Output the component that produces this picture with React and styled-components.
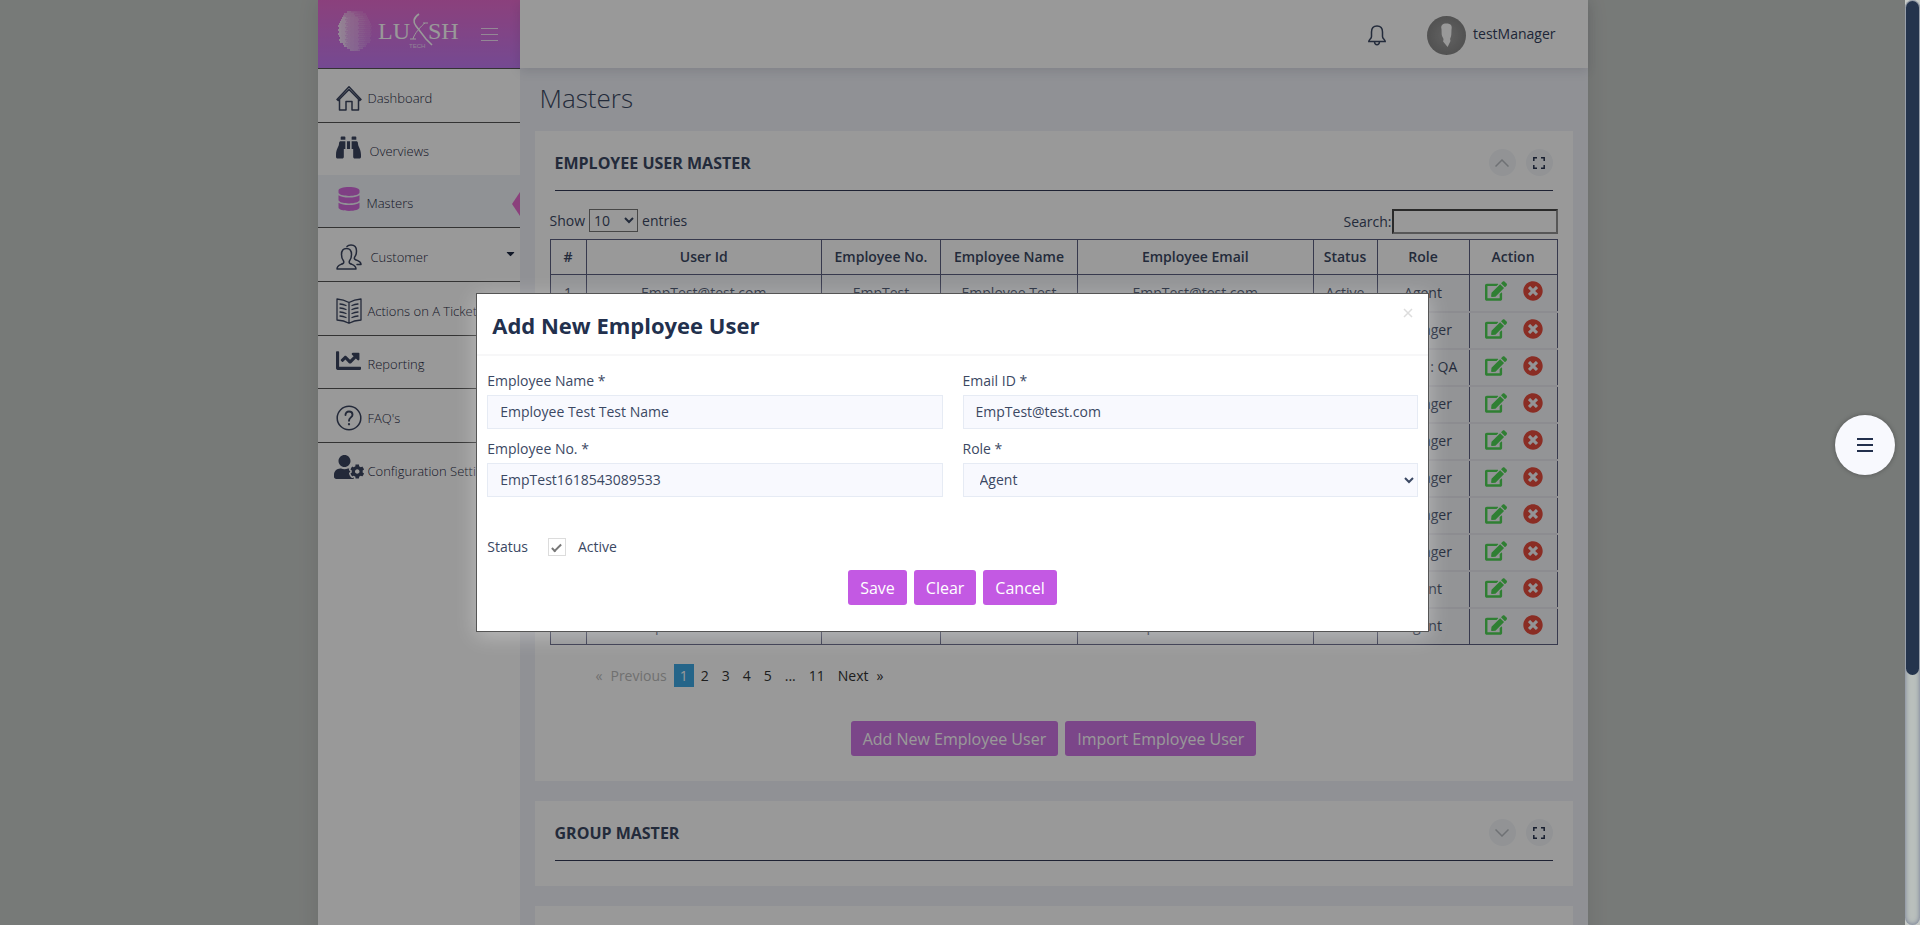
import React, { useState } from 'react';
import styled, { createGlobalStyle, css } from 'styled-components';
import { FaBinoculars, FaDatabase, FaChartLine, FaUserCog, FaEdit, FaTimesCircle, FaCaretDown } from 'react-icons/fa';

const GlobalStyle = createGlobalStyle`
  *, *::before, *::after { box-sizing: border-box; }
  body {
    margin: 0;
    font-family: "Open Sans", "Noto Sans", sans-serif;
    font-size: 14px;
    line-height: 20px;
    color: #3b4863;
    background: #c7cbc8;
  }
  button, input, select { font: inherit; color: inherit; }
  a { color: inherit; text-decoration: none; }
`;

const Window = styled.div`
  display: flex;
  height: 100vh;
  overflow: hidden;
`;

const Viewport = styled.div`
  position: relative;
  flex: 1;
  min-width: 0;
  overflow: hidden;
`;

const Scroller = styled.div`
  height: 100%;
  overflow-y: auto;
  scrollbar-width: none;
`;

const ScrollTrack = styled.div`
  flex: 0 0 15px;
  padding: 1px;
  background: #b9bfbc;
  border-radius: 8px;
  box-shadow: inset 0 0 5px #6b7590;
`;

const ScrollThumb = styled.div`
  height: 73%;
  background: #24344d;
  border-radius: 8px;
`;

const Shell = styled.div`
  max-width: 1270px;
  min-height: 100%;
  margin: 0 auto;
  background: #f0f2f8;
  box-shadow: 0 0 20px rgba(0, 0, 0, 0.1);
  display: grid;
  grid-template-columns: 202px minmax(0, 1fr);
  grid-template-rows: 68px auto;
`;

const Brand = styled.div`
  display: flex;
  align-items: center;
  gap: 22px;
  padding-left: 19px;
  background: linear-gradient(#e86ccf, #c37bf3);
  color: #fff;
  button {
    display: flex;
    padding: 0;
    border: 0;
    background: none;
    opacity: 0.8;
  }
`;

const TopBar = styled.header`
  position: relative;
  display: flex;
  align-items: center;
  justify-content: flex-end;
  padding: 2px 32px 0 0;
  background: #fff;
  box-shadow: 0 3px 10px rgba(60, 70, 100, 0.15);
`;

const PlainButton = styled.button`
  display: flex;
  align-items: center;
  padding: 0;
  border: 0;
  background: none;
`;

const User = styled(PlainButton)`
  margin-left: 41px;
  gap: 7px;
  color: #333f5c;
  span { padding-bottom: 3px; }
`;

const Sidebar = styled.nav`
  background: #fff;
  border-top: 1px solid #555;
`;

const NavItem = styled.a`
  position: relative;
  display: flex;
  align-items: center;
  gap: ${(p) => p.$gap || 6}px;
  height: ${(p) => (p.$line ? (p.$short ? 53 : 54) : 52)}px;
  padding: 4px 0 0 18px;
  border-bottom: ${(p) => (p.$line ? '1px solid #555' : '0')};
  font-size: 13px;
  font-weight: 300;
  white-space: nowrap;
  overflow: hidden;
  color: #1f2a44;
  ${(p) =>
    p.$active &&
    css`
      background: #f0f3f8;
      &::after {
        content: '';
        position: absolute;
        right: 0;
        top: 17px;
        border: 12px solid transparent;
        border-left: 0;
        border-right: 8px solid #e86ccf;
      }
    `}
`;

const NavIcon = styled.span`
  flex: 0 0 26px;
  min-width: 0;
  display: flex;
  justify-content: center;
  color: ${(p) => (p.$active ? '#d469dd' : '#3b4560')};
  padding-bottom: ${(p) => (p.$raised ? 8 : 0)}px;
  svg { flex: none; }
`;

const Caret = styled(FaCaretDown)`
  margin: 0 3px 6px auto;
  color: #1f2a44;
`;

const Main = styled.main`
  padding: 13px 15px 0;
`;

const PageTitle = styled.h1`
  margin: 0 0 16px 5px;
  font-size: 26px;
  line-height: 34px;
  font-weight: 300;
`;

const Card = styled.section`
  margin-bottom: 20px;
  padding: 0 15px;
  min-height: 85px;
  background: #fff;
`;

const CardHead = styled.div`
  display: flex;
  align-items: center;
  gap: 10px;
  height: 60px;
  margin: 0 5px;
  padding-top: 4px;
  border-bottom: 1px solid #333a55;
  h2 {
    flex: 1;
    margin: 0;
    font-size: 16px;
    font-weight: 700;
  }
`;

const RoundButton = styled.button`
  display: flex;
  align-items: center;
  justify-content: center;
  width: 27px;
  height: 27px;
  padding: 0;
  border: 0;
  border-radius: 50%;
  background: #f3f6f9;
  color: ${(p) => (p.$dark ? '#27334f' : '#b9bdc2')};
`;

const TableTools = styled.div`
  display: flex;
  justify-content: space-between;
  align-items: flex-start;
  padding: 18px 0 5px;
  label { display: flex; align-items: center; }
`;

const LengthSelect = styled.select`
  width: 49px;
  height: 23px;
  margin: 0 4px;
  padding: 0;
  border: 1px solid #777;
  background: #fff;
`;

const SearchInput = styled.input`
  width: 166px;
  height: 25px;
  border: 2px solid;
  border-color: #464646 #929292 #929292 #464646;
  background: #fff;
`;

const Table = styled.table`
  width: 100%;
  table-layout: fixed;
  border-collapse: collapse;
  border: 1px solid #5c6080;
  text-align: center;
  th, td {
    padding: 0;
    height: 37px;
    border-left: 1px solid #5c6080;
    white-space: nowrap;
  }
  th { height: 35px; font-weight: 600; border-bottom: 1px solid #5c6080; }
  td { background: #f5f7fa; }
  tbody tr + tr td { border-top: 2px solid #e9eaf0; }
`;

const Actions = styled.div`
  display: flex;
  align-items: center;
  justify-content: center;
  gap: 16px;
  padding: 0 0 3px 2px;
`;

const ActionButton = styled(PlainButton)`
  color: ${(p) => p.$color};
`;

const Pages = styled.nav`
  display: flex;
  gap: 1px;
  margin: 19px 0 34px 40px;
  color: #333;
`;

const PageLink = styled.a`
  display: flex;
  gap: 8px;
  padding: 2px 6px;
  line-height: 19px;
  color: ${(p) => (p.$muted ? '#bbb' : p.$current ? '#fff' : 'inherit')};
  background: ${(p) => (p.$current ? '#3fa9e5' : 'none')};
`;

const ButtonRow = styled.div`
  display: flex;
  justify-content: center;
  gap: 7px;
  padding-bottom: ${(p) => p.$space || 0}px;
`;

const Button = styled.button`
  height: 35px;
  padding: 0 12px;
  border: 0;
  border-radius: 3px;
  background: ${(p) => (p.$soft ? '#cd75e4' : '#c359e3')};
  color: #fff;
  font-size: 16px;
`;

const Overlay = styled.div`
  position: absolute;
  inset: 0;
  display: flex;
  justify-content: center;
  align-items: center;
  background: rgba(0, 0, 0, 0.4);
`;

const Dialog = styled.div`
  width: 50%;
  min-width: 600px;
  background: #fff;
  border: 1px solid #555;
  box-shadow: 0 4px 20px rgba(255, 255, 255, 0.35);
`;

const DialogHead = styled.div`
  display: flex;
  justify-content: space-between;
  align-items: flex-start;
  height: 62px;
  padding: 14px 15px;
  border-bottom: 2px solid #f7f7f8;
  color: #22304d;
  h2 {
    margin: 0;
    font-size: 22px;
    line-height: 34px;
    font-weight: 700;
  }
`;

const Form = styled.form`
  padding: 15px 10px 26px;
`;

const Fields = styled.div`
  display: grid;
  grid-template-columns: 1fr 1fr;
  gap: 10px 20px;
`;

const Field = styled.div`
  display: flex;
  flex-direction: column;
  gap: 4px;
`;

const control = css`
  width: 100%;
  height: 34px;
  border: 1px solid #e6ebf4;
  background: #f8f9fe;
`;

const TextInput = styled.input`
  ${control}
  padding: 0 12px 2px;
`;

const RoleSelect = styled.select`
  ${control}
  padding: 0 0 2px 12px;
  border-radius: 0;
`;

const StatusRow = styled.div`
  display: flex;
  align-items: center;
  margin: 40px 0 13px;
  label { display: flex; align-items: center; gap: 12px; margin-left: 20px; }
`;

const Check = styled.input`
  appearance: none;
  width: 18px;
  height: 18px;
  margin: 0;
  border: 1px solid #dcdcdc;
  display: grid;
  place-items: center;
  &:checked::after {
    content: '';
    width: 5px;
    height: 10px;
    border: solid #777;
    border-width: 0 2px 2px 0;
    transform: rotate(45deg);
  }
`;

const FloatingMenu = styled.button`
  position: absolute;
  right: 10px;
  top: 415px;
  width: 60px;
  height: 60px;
  padding: 0;
  border: 0;
  border-radius: 50%;
  display: flex;
  align-items: center;
  justify-content: center;
  background: #f8f9fe;
  box-shadow: 0 0 5px rgba(0, 0, 0, 0.3);
`;

const Lines = ({ w, h, stroke, color }) => (
  <svg width={w} height={h} viewBox={`0 0 ${w} ${h}`} stroke={color} strokeWidth={stroke}>
    {[stroke / 2, h / 2, h - stroke / 2].map((y) => (
      <line key={y} x1="0" x2={w} y1={y} y2={y} />
    ))}
  </svg>
);

const dots = [];
for (let r = 0; r < 24; r++) {
  for (let c = 0; c < 18; c++) {
    const x = c * 2 + (r % 2) + 1;
    const y = r * 2 + 8;
    if (((x - 18) / 17) ** 2 + ((y - 30.5) / 20.5) ** 2 < 1) {
      dots.push([x, y, Math.max(0.35, 1.05 - x / 50 - Math.max(0, 18 - y) / 40)]);
    }
  }
}

const Logo = () => (
  <svg width="122" height="68" viewBox="0 0 122 68" fill="#fff" fontFamily="Liberation Serif, serif">
    {dots.map(([x, y, r]) => (
      <circle key={`${x}-${y}`} cx={x} cy={y} r={r} />
    ))}
    <text x="41" y="39" fontSize="24">LU</text>
    <text x="91" y="39" fontSize="24">SH</text>
    <g fill="none" stroke="#fff">
      <path d="M82 14c-6 4-6 8-3 12l10 13 6 6" strokeWidth="1.600" />
      <path d="M88 23c-4 3-11 11-12 16M86 23h5M73 39h6" strokeWidth="1" />
    </g>
    <text x="72" y="48" fontSize="6" fontFamily="Liberation Sans, sans-serif" opacity="0.7">TECH</text>
  </svg>
);

const Stroke = ({ size = 26, children, w = 1.5 }) => (
  <svg width={size} height={size} viewBox="0 0 26 26" fill="none" stroke="currentColor" strokeWidth={w} strokeLinejoin="round" strokeLinecap="round">
    {children}
  </svg>
);

const HomeIcon = () => (
  <Stroke>
    <path d="M1 14.500 13 1.800l12 12.700-1.200 1L13 4.500 2.200 15.500zM3.500 14.500V25H10v-8.500h6V25h6.500V14.500" />
  </Stroke>
);
const UsersIcon = () => (
  <Stroke>
    <path d="M1 25c0-4 3-4 6-5.500 1-.5 1-2 .300-3C6 15 5.500 13 5.500 10.500 5.500 6.500 7.500 4.500 10.500 4.500s5 2 5 6c0 2.500-.5 4.500-1.800 6-.7 1-.7 2.500.3 3 3 1.500 6 1.500 6 5.500z" />
    <path d="M11 2.500C12 1.300 13.300 1 15 1c3.500 0 5.500 2.300 5.500 6 0 2.300-.5 4.300-1.700 5.800-.8 1.200-.6 2.200.4 2.700 3 1.500 5.800 1.500 5.800 5h-4" />
  </Stroke>
);
const BookIcon = () => (
  <Stroke w={1.3}>
    <path d="M13 4.500C9.500 2.500 5.500 1.300 1 1v21c4.500.3 8.500 1.300 12 3.300 3.500-2 7.500-3 12-3.300V1c-4.500.3-8.500 1.500-12 3.500zm0 0v20.800M4 6c2.500.3 4.300.8 6 1.500M4 10c2.500.3 4.300.8 6 1.500M4 14c2.500.3 4.300.8 6 1.500M4 18c2.500.3 4.300.8 6 1.500M22 6c-2.500.3-4.300.8-6 1.500M22 10c-2.500.3-4.300.8-6 1.500M22 14c-2.500.3-4.300.8-6 1.500M22 18c-2.500.3-4.300.8-6 1.500" />
  </Stroke>
);
const HelpIcon = () => (
  <Stroke>
    <circle cx="13" cy="13" r="11.800" />
    <path d="M9.500 10c0-2.300 1.500-3.500 3.500-3.500s3.500 1.200 3.500 3.200c0 2.600-3.500 2.800-3.500 6" strokeWidth="1.900" />
    <path d="M13 19v.300" strokeWidth="2.200" />
  </Stroke>
);
const BellIcon = () => (
  <svg width="18" height="21" viewBox="0 0 18 21" fill="none" stroke="#3b4863" strokeWidth="1.500">
    <path d="M9 1C5.500 1 3.500 3.500 3.500 7v4.500c0 2.500-2.700 3-2.700 5h16.400c0-2-2.700-2.500-2.700-5V7c0-3.500-2-6-5.500-6zM6.500 17c.2 1.800 1 2.800 2.500 2.800s2.300-1 2.500-2.800" />
  </svg>
);
const Avatar = () => (
  <svg width="39" height="39" viewBox="0 0 39 39">
    <defs>
      <radialGradient id="avatar">
        <stop offset="0" stopColor="#a4a4a4" />
        <stop offset="1" stopColor="#888" />
      </radialGradient>
    </defs>
    <circle cx="19.500" cy="19.500" r="19.500" fill="url(#avatar)" />
    <path d="M14.500 13c-1-3.500 1-5.500 5-5.500s6 2 5 6l-.2 5c-.2 2-1 3.500-1.200 4.500l.4 2-2.900 6-4.500-5.500.4-2c0-1.500-1.600-3-1.800-5z" fill="#fff" />
  </svg>
);
const Chevron = ({ up }) => (
  <svg width="14" height="8" viewBox="0 0 14 8" fill="none" stroke="currentColor" strokeWidth="1.500">
    <path d={up ? 'M.5 7.500 7 1l6.500 6.500' : 'M.5.500 7 7 13.500.5'} />
  </svg>
);
const ExpandIcon = () => (
  <svg width="12" height="12" viewBox="0 0 12 12" fill="none" stroke="currentColor" strokeWidth="1.500">
    <path d="M.8 4V.8H4M8 .8h3.200V4M11.200 8v3.200H8M4 11.200H.8V8" />
  </svg>
);

const NAV = [
  { label: 'Dashboard', icon: <HomeIcon />, line: true },
  { label: 'Overviews', icon: <FaBinoculars size={25} />, raised: true, gap: 8 },
  { label: 'Masters', icon: <FaDatabase size={24} />, raised: true, line: true, active: true, gap: 5 },
  { label: 'Customer', icon: <UsersIcon />, line: true, caret: true, gap: 9 },
  { label: 'Actions on A Ticket', icon: <BookIcon />, line: true },
  { label: 'Reporting', icon: <FaChartLine size={25} />, raised: true, line: true },
  { label: "FAQ's", icon: <HelpIcon />, line: true },
  { label: 'Configuration Settings', icon: <FaUserCog size={30} />, raised: true },
];

const first = ['EmpTest@test.com', 'EmpTest', 'Employee Test'];
const last = ['drmipat@luxshtech.com', 'EA710', 'Parth Bhavsar'];
const ROLES = ['Agent', 'Manager', 'Agent : QA', 'Manager', 'Manager', 'Manager', 'Manager', 'Manager', 'Agent', 'Agent'];

const CardHeader = ({ title, open }) => (
  <CardHead>
    <h2>{title}</h2>
    <RoundButton aria-label={open ? 'Collapse' : 'Expand'}><Chevron up={open} /></RoundButton>
    <RoundButton $dark aria-label="Full screen"><ExpandIcon /></RoundButton>
  </CardHead>
);

export default function App() {
  const [form, setForm] = useState({
    name: 'Employee Test Test Name',
    email: 'EmpTest@test.com',
    no: 'EmpTest1618543089533',
    role: 'Agent',
    active: true,
  });
  const set = (key) => (e) => setForm({ ...form, [key]: e.target.value });

  return (
    <Window>
      <GlobalStyle />
      <Viewport>
        <Scroller>
          <Shell>
            <Brand>
              <Logo />
              <button aria-label="Toggle menu"><Lines w={17} h={13} stroke={1} color="#fff" /></button>
            </Brand>
            <TopBar>
              <PlainButton aria-label="Notifications"><BellIcon /></PlainButton>
              <User><Avatar /><span>testManager</span></User>
            </TopBar>
            <Sidebar>
              {NAV.map((n) => (
                <NavItem key={n.label} href="#" $line={n.line} $short={n.raised} $active={n.active} $gap={n.gap}>
                  <NavIcon $active={n.active} $raised={n.raised}>{n.icon}</NavIcon>
                  {n.label}
                  {n.caret && <Caret size={13} />}
                </NavItem>
              ))}
            </Sidebar>
            <Main>
              <PageTitle>Masters</PageTitle>
              <Card>
                <CardHeader title="EMPLOYEE USER MASTER" open />
                <TableTools>
                  <label>Show<LengthSelect defaultValue="10"><option>10</option><option>25</option></LengthSelect>entries</label>
                  <label>Search:<SearchInput type="search" /></label>
                </TableTools>
                <Table>
                  <colgroup>
                    <col style={{ width: 36 }} />
                    <col />
                    <col style={{ width: 119 }} />
                    <col style={{ width: 137 }} />
                    <col />
                    <col style={{ width: 64 }} />
                    <col style={{ width: 92 }} />
                    <col style={{ width: 88 }} />
                  </colgroup>
                  <thead>
                    <tr>
                      {['#', 'User Id', 'Employee No.', 'Employee Name', 'Employee Email', 'Status', 'Role', 'Action'].map((h) => (
                        <th key={h}>{h}</th>
                      ))}
                    </tr>
                  </thead>
                  <tbody>
                    {ROLES.map((role, i) => {
                      const [id, no, name] = i === 9 ? last : first;
                      return (
                        <tr key={i}>
                          <td>{i + 1}</td>
                          <td>{id}</td>
                          <td>{no}</td>
                          <td>{name}</td>
                          <td>{id}</td>
                          <td>Active</td>
                          <td>{role}</td>
                          <td>
                            <Actions>
                              <ActionButton $color="#4fd455" aria-label="Edit"><FaEdit size={22} /></ActionButton>
                              <ActionButton $color="#e64c3c" aria-label="Delete"><FaTimesCircle size={20} /></ActionButton>
                            </Actions>
                          </td>
                        </tr>
                      );
                    })}
                  </tbody>
                </Table>
                <Pages>
                  <PageLink $muted><span>«</span><span>Previous</span></PageLink>
                  <PageLink href="#" $current>1</PageLink>
                  {['2', '3', '4', '5', '...', '11'].map((p) => (
                    <PageLink key={p} href="#">{p}</PageLink>
                  ))}
                  <PageLink href="#"><span>Next</span><span>»</span></PageLink>
                </Pages>
                <ButtonRow $space={25}>
                  <Button $soft>Add New Employee User</Button>
                  <Button $soft>Import Employee User</Button>
                </ButtonRow>
              </Card>
              <Card><CardHeader title="GROUP MASTER" /></Card>
              <Card />
            </Main>
          </Shell>
        </Scroller>
        <Overlay>
          <Dialog role="dialog" aria-labelledby="dialog-title">
            <DialogHead>
              <h2 id="dialog-title">Add New Employee User</h2>
              <PlainButton aria-label="Close">
                <svg width="10" height="10" viewBox="0 0 10 10" stroke="#ddd" strokeWidth="1.500"><path d="m1 1 8 8M9 1 1 9" /></svg>
              </PlainButton>
            </DialogHead>
            <Form onSubmit={(e) => e.preventDefault()}>
              <Fields>
                <Field>
                  <label htmlFor="name">Employee Name *</label>
                  <TextInput id="name" value={form.name} onChange={set('name')} />
                </Field>
                <Field>
                  <label htmlFor="email">Email ID *</label>
                  <TextInput id="email" value={form.email} onChange={set('email')} />
                </Field>
                <Field>
                  <label htmlFor="no">Employee No. *</label>
                  <TextInput id="no" value={form.no} onChange={set('no')} />
                </Field>
                <Field>
                  <label htmlFor="role">Role *</label>
                  <RoleSelect id="role" value={form.role} onChange={set('role')}>
                    <option>Agent</option>
                    <option>Manager</option>
                  </RoleSelect>
                </Field>
              </Fields>
              <StatusRow>
                <span>Status</span>
                <label>
                  <Check type="checkbox" checked={form.active} onChange={(e) => setForm({ ...form, active: e.target.checked })} />
                  Active
                </label>
              </StatusRow>
              <ButtonRow>
                <Button type="submit">Save</Button>
                <Button type="button">Clear</Button>
                <Button type="button">Cancel</Button>
              </ButtonRow>
            </Form>
          </Dialog>
        </Overlay>
        <FloatingMenu aria-label="Menu"><Lines w={16} h={14} stroke={2} color="#22304d" /></FloatingMenu>
      </Viewport>
      <ScrollTrack><ScrollThumb /></ScrollTrack>
    </Window>
  );
}
